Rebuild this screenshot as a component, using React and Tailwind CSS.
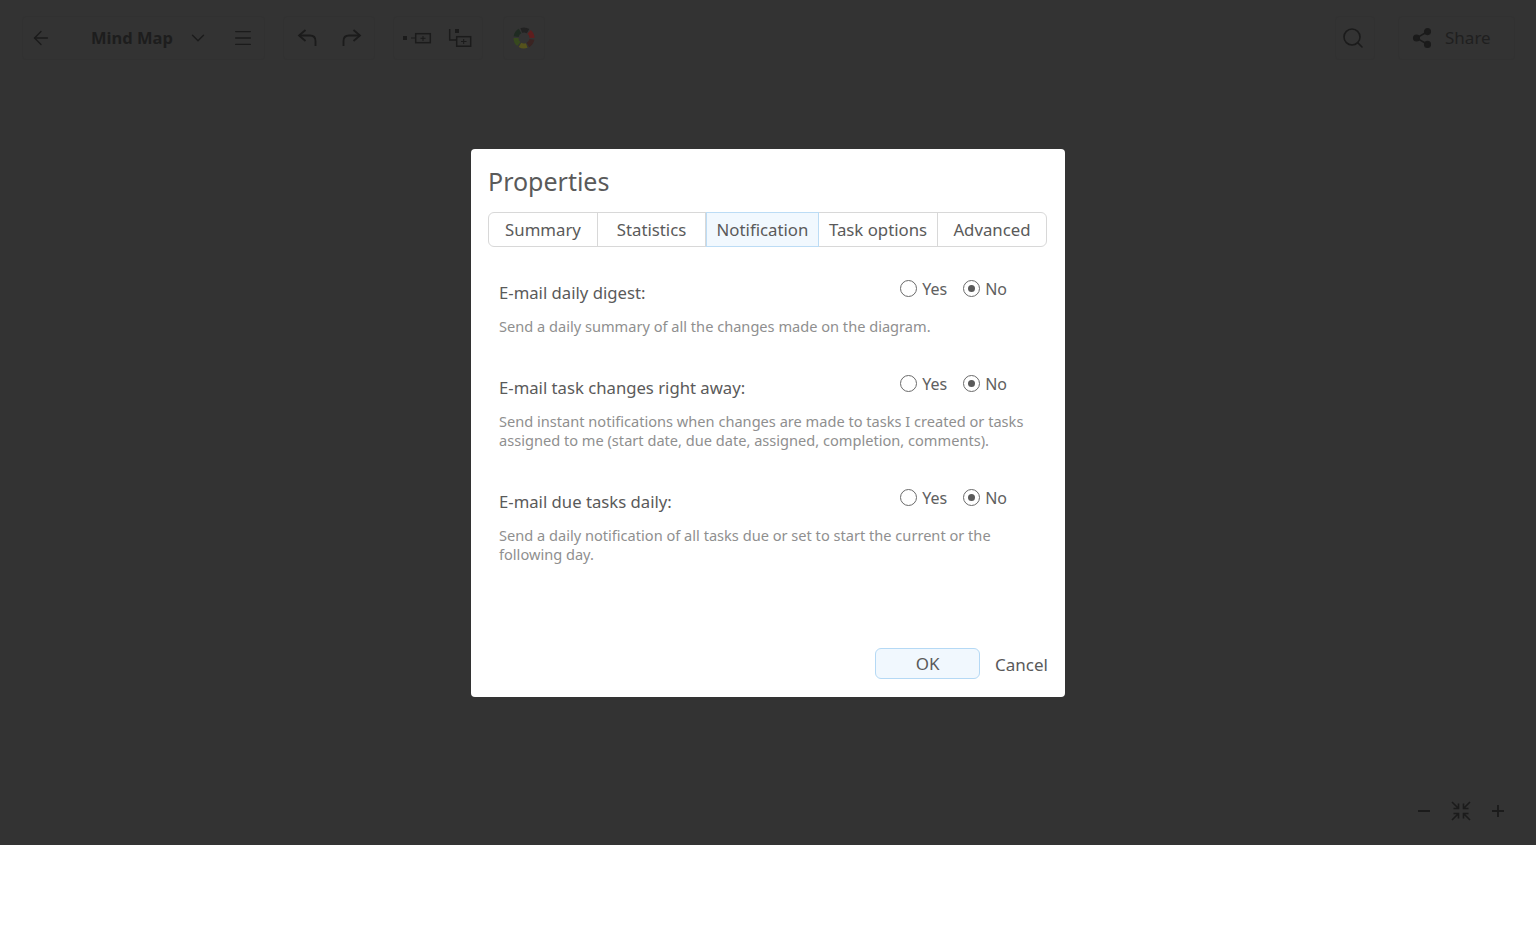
import { ArrowLeft, ChevronDown, Menu, Search, Share2 } from "lucide-react";

const font = { fontFamily: '"Noto Sans", sans-serif' };

function Undo({ flip }) {
  return (
    <svg width="20" height="18" viewBox="0 0 20 18" fill="none" stroke="currentColor" strokeWidth="1.8" className={flip ? "-scale-x-100" : ""}>
      <path d="M8.5 1 L2 6.5 L8.5 12" />
      <path d="M2 6.5 H13 C16.5 6.5 18.5 8.5 18.5 12 V17" />
    </svg>
  );
}

function AddSibling() {
  return (
    <svg width="30" height="14" viewBox="0 0 30 14" fill="none" stroke="currentColor" strokeWidth="1.5">
      <rect x="0" y="5" width="4" height="4" fill="currentColor" stroke="none" />
      <path d="M8 7 H12" strokeWidth="1" />
      <rect x="12.7" y="2.7" width="14.6" height="9" />
      <path d="M20 5 V10 M17.5 7.3 H22.5" strokeWidth="1" />
    </svg>
  );
}

function AddChild() {
  return (
    <svg width="24" height="20" viewBox="0 0 24 20" fill="none" stroke="currentColor" strokeWidth="1.5">
      <rect x="7" y="1" width="4" height="4" fill="currentColor" stroke="none" />
      <path d="M1.7 1 V12 H8" />
      <rect x="8.7" y="8.7" width="14" height="9.5" />
      <path d="M15.7 11 V16 M13 13.5 H18.5" strokeWidth="1" />
    </svg>
  );
}

function Ring() {
  const colors = ["#222222", "#5e1e1e", "#3a2422", "#55521c", "#37491e", "#1f2b22"];
  return (
    <svg width="22" height="22" viewBox="0 0 22 22" fill="none" strokeWidth="5">
      {colors.map((c, i) => (
        <circle
          key={i}
          cx="11"
          cy="11"
          r="8"
          stroke={c}
          strokeDasharray="7 43.3"
          transform={`rotate(${i * 60 - 110} 11 11)`}
        />
      ))}
    </svg>
  );
}

function FitIcon() {
  return (
    <svg width="20" height="20" viewBox="0 0 20 20" fill="none" stroke="currentColor" strokeWidth="1.6">
      <path d="M1 1 L7.5 7.5 M7.5 2.5 V7.5 H2.5" />
      <path d="M19 1 L12.5 7.5 M12.5 2.5 V7.5 H17.5" />
      <path d="M1 19 L7.5 12.5 M7.5 17.5 V12.5 H2.5" />
      <path d="M19 19 L12.5 12.5 M12.5 17.5 V12.5 H17.5" />
    </svg>
  );
}

function Toolbar() {
  return (
    <div className="flex items-center justify-between h-[75px] pl-[22px] pr-[21px] text-[#1b1b1b]">
      <div className="flex items-center gap-[18px]">
        <div className="flex items-center w-[243px] h-11 border border-[#313131] rounded">
          <ArrowLeft size={22} strokeWidth={1.5} className="ml-[7px]" />
          <span className="ml-[39px] mt-[2px] text-[16.5px] font-bold text-[#1d1d1d]">Mind Map</span>
          <ChevronDown size={22} strokeWidth={1.5} className="ml-[14px]" />
          <Menu size={22} strokeWidth={1.5} className="ml-[23px]" />
        </div>
        <div className="flex items-center gap-[25px] w-[92px] h-11 pl-[13px] border border-[#313131] rounded">
          <Undo />
          <Undo flip />
        </div>
        <div className="flex items-center gap-[15px] w-[90px] h-11 pl-[9px] border border-[#313131] rounded">
          <AddSibling />
          <AddChild />
        </div>
        <div className="flex items-center justify-center w-[42px] h-11 ml-[2px] border border-[#313131] rounded">
          <Ring />
        </div>
      </div>
      <div className="flex items-center gap-[23px]">
        <div className="flex items-center justify-center w-10 h-11 pr-[4px] border border-[#313131] rounded">
          <Search size={24} strokeWidth={1.6} />
        </div>
        <div className="flex items-center w-[117px] h-11 pl-[12px] border border-[#313131] rounded">
          <Share2 size={22} fill="currentColor" strokeWidth={1.8} />
          <span className="ml-[12px] text-[17px] text-[#1f1f1f]">Share</span>
        </div>
      </div>
    </div>
  );
}

function ZoomControls() {
  return (
    <div className="flex items-center justify-end gap-[21px] pr-[32px] text-[#1b1b1b]">
      <svg width="12" height="12" viewBox="0 0 12 12" stroke="currentColor" strokeWidth="2">
        <path d="M0 6 H12" />
      </svg>
      <FitIcon />
      <svg width="12" height="12" viewBox="0 0 12 12" stroke="currentColor" strokeWidth="1.8">
        <path d="M0 6 H12 M6 0 V12" />
      </svg>
    </div>
  );
}

const tabs = [
  { label: "Summary", width: "w-[109px]" },
  { label: "Statistics", width: "w-[108px]" },
  { label: "Notification", width: "w-[113px]", active: true },
  { label: "Task options", width: "w-[119px]" },
  { label: "Advanced", width: "w-[108px]" },
];

const options = [
  {
    title: "E-mail daily digest:",
    text: "Send a daily summary of all the changes made on the diagram.",
  },
  {
    title: "E-mail task changes right away:",
    text: "Send instant notifications when changes are made to tasks I created or tasks assigned to me (start date, due date, assigned, completion, comments).",
  },
  {
    title: "E-mail due tasks daily:",
    text: "Send a daily notification of all tasks due or set to start the current or the following day.",
  },
];

function Radio({ label, checked }) {
  return (
    <div className="flex items-center gap-[5px]">
      <span className="flex items-center justify-center w-[17px] h-[17px] rounded-full border border-[#6a6a6a] bg-white">
        {checked && <span className="w-[7px] h-[7px] rounded-full bg-[#5a5a5a]" />}
      </span>
      <span className="text-[16px] leading-[20px] text-[#606060]">{label}</span>
    </div>
  );
}

function OptionRow({ title, text }) {
  return (
    <div className="mb-[38px]">
      <div className="flex items-start justify-between pr-[41px]">
        <div className="mt-[3px] text-[16.7px] leading-[22px] text-[#5a5a5a]">{title}</div>
        <div className="flex items-center gap-[16px]">
          <Radio label="Yes" />
          <Radio label="No" checked />
        </div>
      </div>
      <p className="mt-[13px] w-[540px] text-[14.6px] leading-[19px] text-[#8f8f8f]">{text}</p>
    </div>
  );
}

function Dialog() {
  return (
    <div className="flex flex-col w-[594px] h-[548px] px-[17px] rounded bg-white">
      <h2 className="mt-[15px] text-[25px] leading-[34px] text-[#5a5a5a]">Properties</h2>
      <div className="flex mt-[14px] w-[559px] h-[35px] border border-[#d8d8d8] rounded-md">
        {tabs.map((t) => (
          <div
            key={t.label}
            className={`flex shrink-0 items-center justify-center -my-px pt-[1px] text-[16.8px] text-[#5a5a5a] ${t.width} ${
              t.active ? "bg-[#f1f8fe] border border-[#bcdcf5]" : "border-r border-[#d8d8d8] last:border-r-0"
            }`}
          >
            {t.label}
          </div>
        ))}
      </div>
      <div className="mt-[32px] pl-[11px]">
        {options.map((o) => (
          <OptionRow key={o.title} title={o.title} text={o.text} />
        ))}
      </div>
      <div className="mt-auto mb-[18px] flex items-center justify-end">
        <button className="w-[105px] h-[31px] pt-px rounded-md border border-[#b5d9f5] bg-[#f1f8fe] text-[17px] text-[#5a5a5a]">
          OK
        </button>
        <span className="ml-[15px] mt-[4px] text-[17px] text-[#5a5a5a]">Cancel</span>
      </div>
    </div>
  );
}

export default function App() {
  return (
    <div className="h-[950px] bg-white" style={font}>
      <div className="relative flex flex-col justify-between h-[845px] pb-[24px] bg-[#333]">
        <Toolbar />
        <ZoomControls />
        <div className="absolute inset-0 flex items-center justify-center">
          <Dialog />
        </div>
      </div>
    </div>
  );
}
